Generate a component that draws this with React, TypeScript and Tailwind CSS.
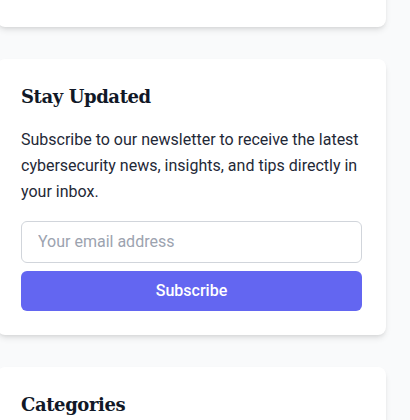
import React from "react";

export default function App() {
  return (
    <div className="min-h-screen w-[410px] overflow-hidden bg-[#f9fafb]" style={{ fontFamily: "Roboto, 'Liberation Sans', sans-serif" }}>
      <div className="-ml-[3px] w-[389px] flex flex-col gap-8 -mt-[33px]">
        <div className="h-[60px] rounded-lg bg-white shadow-md" />
        <div className="rounded-lg bg-white p-6 shadow-md">
          <h3 className="mb-4 text-[18px] leading-7 tracking-[-0.4px] font-bold text-[#111827]" style={{ fontFamily: "'Roboto Slab', 'DejaVu Serif', serif" }}>
            Stay Updated
          </h3>
          <p className="mb-4 text-base leading-[26px] text-[#1f2937]">
            Subscribe to our newsletter to receive the latest cybersecurity news, insights, and tips directly in your inbox.
          </p>
          <div className="flex flex-col gap-2">
            <input
              type="email"
              placeholder="Your email address"
              className="w-full rounded-md border border-[#d1d5db] bg-white px-4 py-2 text-base leading-6 text-[#1f2937] placeholder:text-[#9ca3af] outline-none"
            />
            <button className="w-full rounded-md bg-[#6366f1] py-2 text-base leading-6 font-medium text-white">
              Subscribe
            </button>
          </div>
        </div>
        <div className="rounded-lg bg-white p-6 shadow-md">
          <h3 className="mb-4 text-[18px] leading-7 tracking-[-0.4px] font-bold text-[#111827]" style={{ fontFamily: "'Roboto Slab', 'DejaVu Serif', serif" }}>
            Categories
          </h3>
          <div className="h-[100px]" />
        </div>
      </div>
    </div>
  );
}
